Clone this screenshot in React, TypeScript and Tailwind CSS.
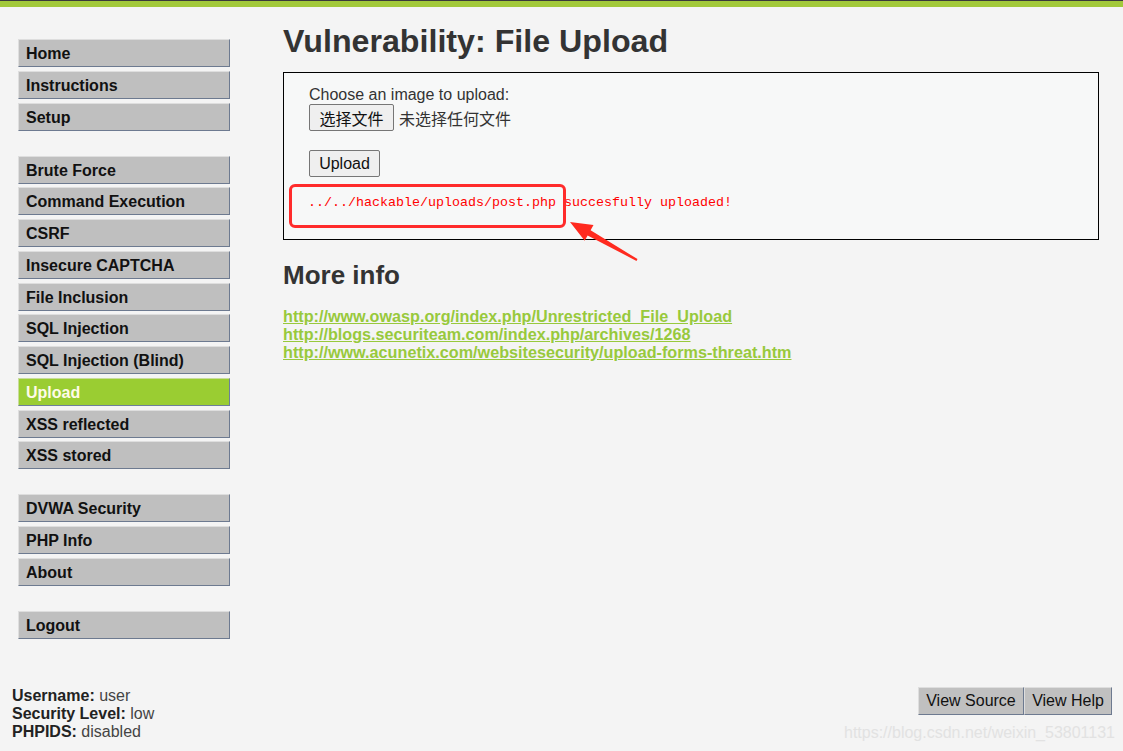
import React from 'react';

const groups: string[][] = [
  ['Home', 'Instructions', 'Setup'],
  [
    'Brute Force',
    'Command Execution',
    'CSRF',
    'Insecure CAPTCHA',
    'File Inclusion',
    'SQL Injection',
    'SQL Injection (Blind)',
    'Upload',
    'XSS reflected',
    'XSS stored',
  ],
  ['DVWA Security', 'PHP Info', 'About'],
  ['Logout'],
];

const links = [
  'http://www.owasp.org/index.php/Unrestricted_File_Upload',
  'http://blogs.securiteam.com/index.php/archives/1268',
  'http://www.acunetix.com/websitesecurity/upload-forms-threat.htm',
];

const MenuItem: React.FC<{ label: string }> = ({ label }) => {
  const selected = label === 'Upload';
  return (
    <div
      className={
        selected
          ? 'h-[28px] flex items-center pl-[7px] pt-[2px] border border-t-[#c8dc9a] border-l-[#c8dc9a] border-r-[#6d7f9a] border-b-[#6d7f9a] bg-[#9acd32] text-[#fffbe8] text-[16px] font-bold'
          : 'h-[28px] flex items-center pl-[7px] pt-[2px] border border-t-[#dedede] border-l-[#dedede] border-r-[#6d7a90] border-b-[#6d7a90] bg-[#bfbfbf] text-[#111] text-[16px] font-bold'
      }
    >
      {label}
    </div>
  );
};

const Sidebar: React.FC = () => (
  <nav className="w-[212px] shrink-0 mt-[32px] flex flex-col gap-[25px]">
    {groups.map((group, gi) => (
      <div key={gi} className="flex flex-col gap-[3.75px]">
        {group.map((label) => (
          <MenuItem key={label} label={label} />
        ))}
      </div>
    ))}
  </nav>
);

const UploadBox: React.FC = () => (
  <div className="relative mt-[12px] h-[168px] border border-black bg-[#f7f8f8] pl-[25px] pt-[13px]">
    <div className="text-[16px] leading-[18px] text-[#333]">Choose an image to upload:</div>
    <div className="flex items-center gap-[5px]">
      <button
        className="h-[27px] w-[85px] border border-[#767676] rounded-[2px] bg-[#efefef] text-[16px] text-[#111]"
        style={{ fontFamily: '"Noto Sans CJK SC", sans-serif' }}
      >
        选择文件
      </button>
      <span
        className="text-[16px] text-[#333]"
        style={{ fontFamily: '"Noto Sans CJK SC", sans-serif' }}
      >
        未选择任何文件
      </span>
    </div>
    <button className="mt-[19px] h-[27px] w-[71px] border border-[#767676] rounded-[2px] bg-[#efefef] text-[16px] text-[#111] block">
      Upload
    </button>
    <pre className="mt-[18px] -ml-[1px] text-[13.33px] leading-[16px] text-[#ff0000] font-['Liberation_Mono',monospace]">
      ../../hackable/uploads/post.php succesfully uploaded!
    </pre>
    {/* annotation box */}
    <div className="absolute left-[5px] top-[111px] w-[277px] h-[44px] border-[3px] border-[#ff2b2b] rounded-[6px]" />
  </div>
);

const Arrow: React.FC = () => (
  <svg className="absolute left-0 top-0 pointer-events-none" width="1123" height="751">
    <polygon
      points="570,222 593.5,225.1 590.6,230.3 637.5,259.1 636.5,260.9 587.6,235.5 584.7,240.7"
      fill="#ff2a1f"
    />
  </svg>
);

export default function App() {
  return (
    <div className="relative w-full h-[751px] bg-[#f4f4f4] flex flex-col overflow-hidden font-['Liberation_Sans',Arial,sans-serif]">
      <div className="h-[1px] bg-[#3a3a3a]" />
      <div className="h-[6px] bg-[#a2c93a]" />
      <div className="flex flex-1 pl-[18px]">
        <Sidebar />
        <main className="ml-[53px] w-[816px]">
          <h1 className="mt-[15px] text-[32.2px] leading-[38px] font-bold text-[#333]">
            Vulnerability: File Upload
          </h1>
          <UploadBox />
          <h2 className="mt-[20px] text-[26px] leading-[30px] font-bold text-[#333]">More info</h2>
          <div className="mt-[17px] flex flex-col">
            {links.map((l) => (
              <a
                key={l}
                href="#"
                className="text-[16.2px] leading-[18px] font-bold text-[#98c93c] underline w-fit"
              >
                {l}
              </a>
            ))}
          </div>
        </main>
      </div>
      <footer className="flex justify-between items-start pl-[12px] pr-[11px] pb-[10px]">
        <div className="text-[16px] leading-[18px] text-[#444]">
          <div>
            <span className="font-bold text-[#222]">Username:</span> user
          </div>
          <div>
            <span className="font-bold text-[#222]">Security Level:</span> low
          </div>
          <div>
            <span className="font-bold text-[#222]">PHPIDS:</span> disabled
          </div>
        </div>
        <div className="flex">
          <button className="h-[28px] w-[106px] border border-t-[#dedede] border-l-[#dedede] border-r-[#6d7a90] border-b-[#6d7a90] bg-[#c0c0c0] text-[16px] text-[#111]">
            View Source
          </button>
          <button className="h-[28px] w-[88px] border border-t-[#dedede] border-l-[#dedede] border-r-[#6d7a90] border-b-[#6d7a90] bg-[#c0c0c0] text-[16px] text-[#111]">
            View Help
          </button>
        </div>
      </footer>
      <div className="absolute right-[8px] bottom-[9px] text-[16px] leading-[18px] text-[#e2e2e2]">
        https://blog.csdn.net/weixin_53801131
      </div>
      <Arrow />
    </div>
  );
}
